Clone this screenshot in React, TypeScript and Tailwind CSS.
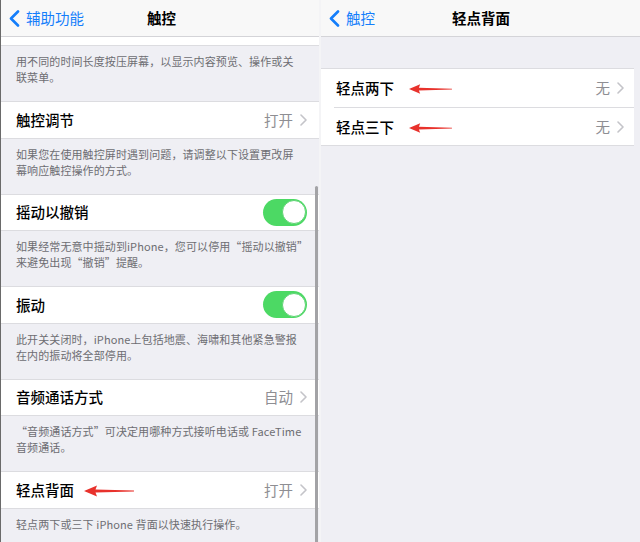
import React from "react";

const font = { fontFamily: '"Noto Sans CJK SC", "Noto Sans", sans-serif' };

const Chevron = () => (
  <svg width="7" height="12" viewBox="0 0 7 12" className="ml-[7px]">
    <path d="M1 1 L6 6 L1 11" fill="none" stroke="#c4c4c9" strokeWidth="1.6" strokeLinecap="round" strokeLinejoin="round" />
  </svg>
);

const BackChevron = () => (
  <svg width="11" height="17" viewBox="0 0 11 17">
    <path d="M9 1.5 L2 8.5 L9 15.5" fill="none" stroke="#147efb" strokeWidth="2.6" strokeLinecap="round" strokeLinejoin="round" />
  </svg>
);

const RedArrow = ({ width = 50 }: { width?: number }) => (
  <svg width={width} height="12" viewBox="0 0 50 12">
    <path d="M0 6 L13 0.5 L11.5 4.6 L50 5.6 L50 6.6 L11.5 7.6 L13 11.5 Z" fill="#e8322c" />
  </svg>
);

const Toggle = () => (
  <div className="w-[44px] h-[27px] rounded-full bg-[#4cd964] relative">
    <div className="absolute right-[1.5px] top-[1.5px] w-[24px] h-[24px] rounded-full bg-white border border-[#5fd474]" />
  </div>
);

const Footer = ({ lines, h = "h-[55px]" }: { lines: string[]; h?: string }) => (
  <div className={`${h} pl-[15px] pt-[7px] text-[11px] tracking-[0.1px] leading-[16px] text-[#6d6d72] whitespace-nowrap`}>
    {lines.map((l, i) => (
      <div key={i}>{l}</div>
    ))}
  </div>
);

const Row = ({ label, value, toggle, arrow }: { label: string; value?: string; toggle?: boolean; arrow?: boolean }) => (
  <div className="h-[37.5px] bg-white border-y border-[#dcdce0] flex items-center pl-[15px] pr-[12px]">
    <span className="text-[14.5px] font-medium text-black">{label}</span>
    {arrow && (
      <span className="ml-[10px] mt-[2px] flex">
        <RedArrow />
      </span>
    )}
    <div className="flex-1" />
    {toggle ? (
      <Toggle />
    ) : (
      <div className="flex items-center">
        <span className="text-[14.5px] text-[#8e8e93]">{value}</span>
        <Chevron />
      </div>
    )}
  </div>
);

const NavBar = ({ back, title, titleClass }: { back: string; title: string; titleClass: string }) => (
  <div className="h-[37px] bg-[#f8f8f8] border-b border-[#d4d4d8] flex items-center relative">
    <div className="flex items-center pl-[8px] gap-[6px]">
      <BackChevron />
      <span className="text-[14.5px] text-[#147efb]">{back}</span>
    </div>
    <span className={`absolute ${titleClass} text-[14.5px] font-semibold text-black`}>{title}</span>
  </div>
);

export default function App() {
  return (
    <div className="w-[640px] h-[542px] overflow-hidden flex bg-[#efeff4]" style={font}>
      <div className="w-[319px] relative border-l border-[#6a6a6a] bg-[#efeff4]">
        <NavBar back="辅助功能" title="触控" titleClass="left-[146px]" />
        <div className="h-[9px] bg-white border-b border-[#dcdce0]" />
        <Footer lines={["用不同的时间长度按压屏幕，以显示内容预览、操作或关", "联菜单。"]} />
        <Row label="触控调节" value="打开" />
        <Footer lines={["如果您在使用触控屏时遇到问题，请调整以下设置更改屏", "幕响应触控操作的方式。"]} />
        <Row label="摇动以撤销" toggle />
        <Footer lines={["如果经常无意中摇动到iPhone，您可以停用“摇动以撤销”", "来避免出现“撤销”提醒。"]} />
        <Row label="振动" toggle />
        <Footer lines={["此开关关闭时，iPhone上包括地震、海啸和其他紧急警报", "在内的振动将全部停用。"]} />
        <Row label="音频通话方式" value="自动" />
        <Footer lines={["“音频通话方式”可决定用哪种方式接听电话或 FaceTime", "音频通话。"]} />
        <Row label="轻点背面" value="打开" arrow />
        <Footer lines={["轻点两下或三下 iPhone 背面以快速执行操作。"]} />
        <div className="absolute left-[314px] top-[186px] w-[2.5px] h-[360px] bg-[#a3a3a6] rounded-full" />
      </div>
      <div className="w-[2px] bg-[#f4f4f6]" />
      <div className="flex-1 bg-[#efeff4]">
        <NavBar back="触控" title="轻点背面" titleClass="left-[131px]" />
        <div className="h-[31px]" />
        <div className="mr-[6px] bg-white border-y border-[#dcdce0]">
          <div className="h-[38px] flex items-center pl-[15px] pr-[10px]">
            <span className="text-[14.5px] font-medium text-black">轻点两下</span>
            <span className="ml-[15px] mt-[2px] flex">
              <RedArrow width={43} />
            </span>
            <div className="flex-1" />
            <span className="text-[14.5px] text-[#8e8e93]">无</span>
            <Chevron />
          </div>
          <div className="ml-[13px] h-px bg-[#dcdce0]" />
          <div className="h-[37px] flex items-center pl-[15px] pr-[10px]">
            <span className="text-[14.5px] font-medium text-black">轻点三下</span>
            <span className="ml-[15px] mt-[2px] flex">
              <RedArrow width={43} />
            </span>
            <div className="flex-1" />
            <span className="text-[14.5px] text-[#8e8e93]">无</span>
            <Chevron />
          </div>
        </div>
      </div>
    </div>
  );
}
